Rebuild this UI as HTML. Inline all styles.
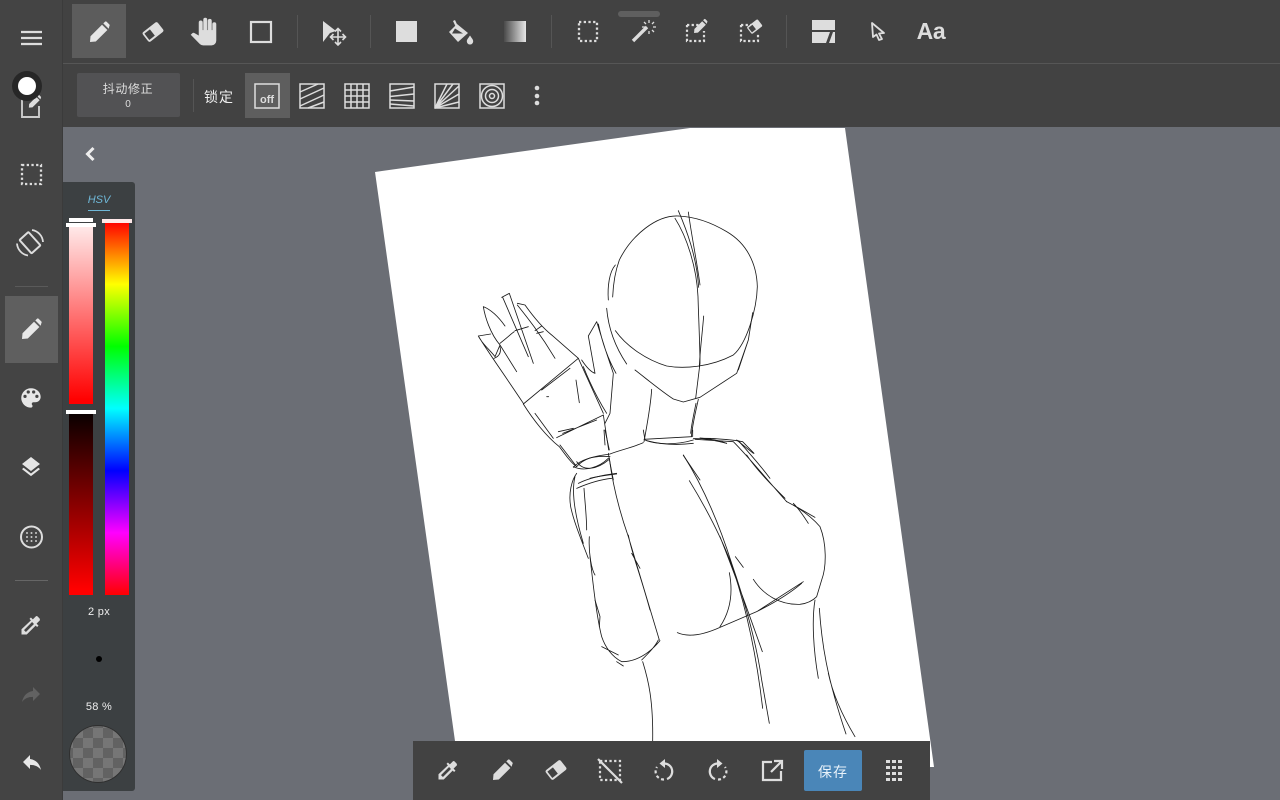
<!DOCTYPE html>
<html><head><meta charset="utf-8">
<style>
html,body{margin:0;padding:0;width:1280px;height:800px;overflow:hidden;background:#6b6e75}
body{position:relative;font-family:"Liberation Sans","WenQuanYi Zen Hei","Noto Sans CJK SC",sans-serif;color:#eee}
.a{position:absolute}
.t{position:absolute;white-space:nowrap;text-align:center;transform:translateX(-50%)}
</style></head><body>
<svg class="a" style="left:0;top:0" width="1280" height="800" viewBox="0 0 1280 800">
<defs>
<path id="pen" d="M3 22 3.500 16.200 15 4.700 20.400 10 8.800 21.500ZM16.300 3.400 18 1.700Q18.800 1 19.600 1.700L22.400 4.500Q23.100 5.300 22.400 6L21.700 8.700Z"/>
<g id="era"><g transform="rotate(-38 12 12)"><rect x="2.500" y="6" width="19" height="12" rx="2"/><rect x="4.200" y="8" width="7" height="8" fill="#424242"/></g></g>
<path id="drop" d="M20.710 5.630l-2.340-2.340a1 1 0 0 0-1.410 0l-3.120 3.120-1.930-1.910-1.410 1.410 1.420 1.420L2.500 16.250V21.500h5.250l8.920-8.920 1.420 1.420 1.410-1.410-1.920-1.920 3.120-3.120a1 1 0 0 0 .01-1.420zM6.920 19L5 17.080l8.060-8.060 1.920 1.920L6.920 19z"/>
</defs>

<!-- paper -->
<polygon points="375,172 690,128 845,128 934,767 930,767 930,741 455,741" fill="#fff"/>

<!-- sketch: upper -->
<g transform="translate(470 200) scale(.33333)" fill="none" stroke="#1a1a1a" stroke-width="2.500" stroke-linecap="round" stroke-linejoin="round">
<path d="M625 48C560 45 485 105 448 180 428 235 428 300 428 290"/>
<path d="M436 195C418 215 412 260 415 300M410 325C415 385 435 440 470 492"/>
<path d="M436 392C470 440 530 480 590 498 640 507 720 502 790 465 830 430 860 330 862 260 860 190 830 130 770 95 720 65 670 50 625 48"/>
<path d="M625 32C650 90 680 170 686 262M655 36C665 110 680 180 690 255M615 55C650 110 680 200 684 290 686 360 690 440 690 490L677 595"/>
<path d="M701 348C697 400 690 450 688 500"/>
<path d="M495 510C540 545 580 578 610 597L640 606 690 592 800 520 835 420 848 338M805 510C815 480 825 450 835 420"/>
<path d="M545 568C542 620 530 680 522 725M685 598C678 630 668 670 664 710M678 610C672 640 665 670 662 700"/>
<path d="M522 718 665 710M530 722C580 735 630 735 670 730M670 716C710 712 760 718 805 722M690 714C720 716 750 722 770 730M805 722C830 750 870 795 900 835M800 722 818 725 852 760M640 766 690 840"/>
<path d="M520 728C490 742 450 750 420 762 385 768 345 770 320 800M310 800C340 815 385 805 415 775M415 760C420 790 425 815 430 840M360 835C385 828 415 825 440 822"/>
<path d="M95 292 118 280 190 490M98 292 175 470M40 320C45 350 60 400 90 435L140 515M40 320C65 330 85 350 105 378M25 408 62 402M25 408C35 430 60 450 75 470L90 435M25 408C50 450 100 520 160 610"/>
<path d="M142 310 165 315C190 350 220 385 245 405L325 475M142 315C170 350 210 400 255 475M90 430C115 410 125 400 133 395M135 392 175 380M195 392 215 378M200 400 220 395M90 440C95 460 85 470 72 475"/>
<path d="M160 612 325 475 400 640M215 570 300 505M318 540 328 608M230 590 236 590"/>
<path d="M160 612C190 660 230 710 268 740 290 770 305 790 320 800M195 640 250 715M260 713 400 645M278 700 380 660"/>
<path d="M400 645 416 750M402 690 405 735"/>
<path d="M335 480C345 495 360 515 375 520L355 408 380 365 405 445 430 520 420 640 405 670M385 372C395 420 410 470 438 520M340 500C360 550 385 600 410 640"/>
</g>
<!-- sketch: lower -->
<g transform="translate(560 430) scale(.33333)" fill="none" stroke="#1a1a1a" stroke-width="2.500" stroke-linecap="round" stroke-linejoin="round">
<path d="M40 112C60 90 100 75 150 80M50 95C70 125 110 120 148 88M55 160C85 145 130 135 170 130M50 175C85 160 125 148 155 145"/>
<path d="M50 130C35 150 25 190 32 230 40 270 60 320 85 385M45 140C35 180 40 240 70 340M72 175C75 220 80 260 80 300M88 320C85 370 95 420 105 435"/>
<path d="M90 380C100 470 110 560 125 620 135 650 155 680 185 695 220 695 260 680 300 632M125 650 175 675M170 695 190 708M245 690C270 665 285 650 295 630"/>
<path d="M105 510 120 560 118 590"/>
<path d="M148 85C155 140 170 220 205 320 230 400 270 540 298 630M205 315C215 370 240 430 270 540M215 370 240 415"/>
<path d="M248 695C265 750 280 810 278 935"/>
<path d="M370 75C430 170 480 290 515 400 550 500 590 640 605 750L628 880M388 152C430 220 490 330 520 420 560 540 590 680 608 835M480 320C520 420 570 560 607 665"/>
<path d="M526 380 550 412"/>
<path d="M508 428C520 490 510 545 480 590M352 608C390 625 440 610 480 592L590 545 730 455M590 545C640 520 690 490 725 460M580 448C610 495 660 525 720 523 745 520 760 510 770 500L785 450C800 410 800 340 780 290 750 255 710 230 680 215"/>
<path d="M405 28 520 35C570 85 630 160 680 215M420 25C450 28 480 35 500 40M530 30 580 70M560 75C590 120 640 170 675 205M700 220C720 240 735 265 745 280M700 225 765 262"/>
<path d="M255 30C290 45 350 45 400 30M255 30 250 0M398 20V0M135 0 148 60M0 45 50 110M-5 5 40 -5"/>
<path d="M765 510C755 570 760 660 775 745M778 535C785 640 800 740 858 912M805 730C820 800 855 870 885 920"/>
</g>
</svg>

<!-- toolbars -->
<div class="a" style="left:0;top:0;width:1280px;height:63px;background:#424242"></div>
<div class="a" style="left:63px;top:63px;width:1217px;height:1px;background:#565656"></div>
<div class="a" style="left:0;top:64px;width:1280px;height:63px;background:#424242"></div>
<div class="a" style="left:0;top:0;width:62px;height:800px;background:#444"></div>
<div class="a" style="left:62px;top:0;width:1px;height:800px;background:#3b3b3b"></div>
<div class="a" style="left:72px;top:4px;width:54px;height:54px;background:#5c5c5c"></div>
<div class="a" style="left:618px;top:11px;width:42px;height:6px;border-radius:3px;background:#5f5f5f"></div>
<div class="a" style="left:77px;top:73px;width:103px;height:44px;background:#525254;border-radius:2px"></div>
<div class="a" style="left:245px;top:73px;width:45px;height:45px;background:#5e5e5e"></div>
<div class="a" style="left:5px;top:296px;width:53px;height:67px;background:#5f5f5f"></div>
<!-- bottom bar -->
<div class="a" style="left:413px;top:741px;width:517px;height:59px;background:#424242"></div>
<div class="a" style="left:804px;top:750px;width:58px;height:41px;background:#4a86b8;border-radius:2px"></div>

<!-- colour panel -->
<div class="a" style="left:63px;top:182px;width:72px;height:609px;background:#3c4042;border-radius:0 3px 3px 0"></div>
<div class="a" style="left:69px;top:226px;width:24px;height:178px;background:linear-gradient(#ffeaea,#ff0000 98%)"></div>
<div class="a" style="left:69px;top:414px;width:24px;height:181px;background:linear-gradient(#0a0000,#ff0000 97%)"></div>
<div class="a" style="left:105px;top:222px;width:24px;height:373px;background:linear-gradient(#f00,#ff0 16.67%,#0f0 33.33%,#0ff 50%,#00f 66.67%,#f0f 83.33%,#f00)"></div>
<div class="a" style="left:69px;top:218px;width:24px;height:4px;background:#fff"></div>
<div class="a" style="left:66px;top:223px;width:30px;height:4px;background:#fff"></div>
<div class="a" style="left:66px;top:410px;width:30px;height:4px;background:#fff"></div>
<div class="a" style="left:102px;top:219px;width:30px;height:4px;background:#ffe9e9"></div>
<div class="a" style="left:88px;top:210px;width:22px;height:1px;background:#6fb8d8"></div>
<div class="a" style="left:96px;top:656px;width:6px;height:6px;border-radius:50%;background:#000"></div>
<div class="a" style="left:70px;top:726px;width:56px;height:56px;border-radius:50%;box-shadow:0 0 0 1px #2f2f2f;background:repeating-conic-gradient(#626262 0 25%,#767676 0 50%) 3px 2px/20px 20px"></div>

<!-- text -->
<div class="t" style="left:128px;top:80px;font-size:12px;letter-spacing:.6px;color:#ddd">抖动修正</div>
<div class="t" style="left:128px;top:99px;font-size:10px;color:#ddd">0</div>
<div class="t" style="left:219px;top:87px;font-size:14px;color:#eee;letter-spacing:1px">锁定</div>
<div class="t" style="left:99px;top:194px;font-size:11px;font-style:italic;color:#6fb8d8">HSV</div>
<div class="t" style="left:99px;top:606px;font-size:11px;letter-spacing:.3px;color:#eee">2 px</div>
<div class="t" style="left:99px;top:701px;font-size:11px;letter-spacing:.3px;color:#eee">58 %</div>
<div class="t" style="left:833px;top:762px;font-size:14px;letter-spacing:1px;color:#e8f2fa">保存</div>
<div class="t" style="left:931px;top:18px;font-size:23px;font-weight:bold;color:#ddd;letter-spacing:-.3px">Aa</div>
<div class="t" style="left:267px;top:94px;font-size:11px;font-weight:bold;color:#ddd">off</div>

<!-- icons -->
<svg class="a" style="left:0;top:0" width="1280" height="800" viewBox="0 0 1280 800" fill="#ddd">
<!-- top row -->
<use href="#pen" transform="translate(87 20)" fill="#e6e6e6"/>
<use href="#era" transform="translate(141 20)"/>
<path transform="translate(190 18) scale(1.13)" stroke="#ddd" stroke-width=".5" d="M23 5.500V20c0 2.200-1.800 4-4 4h-7.300c-1.080 0-2.100-.43-2.850-1.190L1 14.830s1.260-1.230 1.300-1.250c.22-.19.49-.29.79-.29.22 0 .42.06.6.16.04.01 4.310 2.460 4.310 2.460V4c0-.83.67-1.500 1.500-1.500S11 3.170 11 4v7h1V1.500c0-.83.67-1.500 1.500-1.500S15 .67 15 1.500V11h1V2.500c0-.83.67-1.500 1.500-1.500s1.500.67 1.500 1.500V11h1V5.500c0-.83.67-1.500 1.500-1.500s1.500.67 1.500 1.500z"/>
<rect x="251" y="22" width="20" height="20" fill="none" stroke="#ddd" stroke-width="2.200"/>
<g fill="#555"><rect x="297" y="15" width="1" height="33"/><rect x="370" y="15" width="1" height="33"/><rect x="551" y="15" width="1" height="33"/><rect x="786" y="15" width="1" height="33"/><rect x="193" y="79" width="1" height="33"/></g>
<!-- move -->
<path d="M323 21 336 31 330 33 323 42z"/>
<path d="M338 29V44M331 37H346M335 31.500 338 28.500 341 31.500M335 42 338 45 341 42M333.500 34 330.500 37 333.500 40M342.500 34 345.500 37 342.500 40" fill="none" stroke="#ddd" stroke-width="1.600"/>
<rect x="396" y="21" width="21" height="21"/>
<!-- bucket -->
<path d="M449 32 457 24 468 33 458 42Z"/>
<path d="M454 20.500 458 29" stroke="#ddd" stroke-width="2.200" fill="none"/>
<path d="M455 28.500 463 33.500H452z" fill="#424242"/>
<path d="M470 35.500c2 3 3.200 4.200 3.200 5.800a3.200 3.200 0 0 1-6.400 0c0-1.600 1.200-2.800 3.200-5.800z"/>
<defs><linearGradient id="g1"><stop offset="0" stop-color="#4a4a4a"/><stop offset="1" stop-color="#e6e6e6"/></linearGradient></defs>
<rect x="504" y="21" width="22" height="21" fill="url(#g1)"/>
<rect x="579" y="22" width="18" height="19" fill="none" stroke="#ddd" stroke-width="2.300" stroke-dasharray="2.300 2.400"/>
<!-- wand -->
<path d="M633 41 647 27" stroke="#ddd" stroke-width="3.400"/>
<path d="M649 20V23M649 31V34M642 27H645M653 27H656M644 22 646 24M652 30 654 32M654 22 652 24" stroke="#ddd" stroke-width="1.300"/>
<!-- sel pen -->
<path d="M687 25H703M687 25V41H704V31" fill="none" stroke="#ddd" stroke-width="2.200" stroke-dasharray="2.300 2.300"/>
<use href="#pen" transform="translate(692 18) scale(.68)"/>
<!-- sel eraser -->
<path d="M741 25H755M741 25V41H758V33" fill="none" stroke="#ddd" stroke-width="2.200" stroke-dasharray="2.300 2.300"/>
<use href="#era" transform="translate(746 18) scale(.72)"/>
<!-- panels -->
<path d="M812 20H835V30H812ZM812 32H830L826 43H812ZM833 32H835V43H829Z"/>
<!-- cursor -->
<path d="M872 23 884 33 879 33.500 882 39 879 40 876.500 34.500 873 37z" fill="none" stroke="#ddd" stroke-width="1.800" stroke-linejoin="round"/>

<!-- lock row -->
<rect x="255" y="84" width="24" height="24" fill="none" stroke="#ddd" stroke-width="1.500"/>
<g fill="none" stroke="#ddd" stroke-width="1.500">
<rect x="300" y="84" width="24" height="24"/>
<path d="M300 92 318 84M300 99 324 88M300 106 324 95M308 108 324 102"/>
<rect x="345" y="84" width="24" height="24"/>
<path d="M351 84V108M357 84V108M363 84V108M345 90H369M345 96H369M345 102H369"/>
<rect x="390" y="84" width="24" height="24"/>
<path d="M390 91 414 87M390 96.500 414 94M390 100 414 101M390 104 414 106"/>
<rect x="435" y="84" width="24" height="24"/>
<path d="M435 108 447 84M435 108 453 84M435 108 459 86M435 108 459 94M435 108 459 102"/>
<rect x="480" y="84" width="24" height="24"/>
<circle cx="492" cy="96" r="10.500"/><circle cx="492" cy="96" r="6.500"/><circle cx="492" cy="96" r="2.500"/>
</g>
<circle cx="537" cy="88" r="2.300"/><circle cx="537" cy="96" r="2.300"/><circle cx="537" cy="103" r="2.300"/>

<!-- sidebar -->
<path d="M21 32H42M21 38H42M21 44H42" stroke="#ddd" stroke-width="2.200"/>
<path d="M22 99H33M22 99V117H39V106" fill="none" stroke="#ccc" stroke-width="1.900"/>
<use href="#pen" transform="translate(27 94) scale(.62)"/>
<circle cx="27" cy="86" r="15" fill="#272727"/><circle cx="27" cy="86" r="9" fill="#fff"/>
<rect x="22" y="165" width="19" height="19" fill="none" stroke="#ddd" stroke-width="2.300" stroke-dasharray="2.300 2.400"/>
<!-- rotate -->
<g fill="none" stroke="#ddd" stroke-width="1.800">
<rect x="21" y="236.700" width="18" height="12" rx="1" transform="rotate(48 30 242.700)" stroke-width="2"/>
<path d="M32 230A13 13 0 0 1 43 242M28 255.500A13 13 0 0 1 17 243.500"/>
</g>
<rect x="15" y="286" width="33" height="1" fill="#5a5a5a"/>
<use href="#pen" transform="translate(19 317)" fill="#e8e8e8"/>
<path transform="translate(18 385) scale(1.08)" d="M12 3a9 9 0 0 0 0 18c.83 0 1.500-.67 1.500-1.500 0-.39-.15-.74-.39-1.010-.23-.26-.38-.61-.38-.99 0-.83.67-1.500 1.500-1.500H16c2.760 0 5-2.240 5-5 0-4.420-4.030-8-9-8zm-5.500 9a1.500 1.500 0 1 1 0-3 1.500 1.500 0 0 1 0 3zm3-4a1.500 1.500 0 1 1 0-3 1.500 1.500 0 0 1 0 3zm5 0a1.500 1.500 0 1 1 0-3 1.500 1.500 0 0 1 0 3zm3 4a1.500 1.500 0 1 1 0-3 1.500 1.500 0 0 1 0 3z" fill="#e6e6e6"/>
<path transform="translate(19 455)" d="M11.990 18.540l-7.370-5.730L3 14.070l9 7 9-7-1.630-1.270-7.380 5.740zM12 16l7.360-5.730L21 9l-9-7-9 7 1.630 1.270L12 16z" fill="#e6e6e6"/>
<circle cx="31.500" cy="537" r="10.500" fill="none" stroke="#ddd" stroke-width="2"/>
<g fill="#ccc"><circle cx="27" cy="533" r="1"/><circle cx="31.500" cy="533" r="1"/><circle cx="36" cy="533" r="1"/><circle cx="27" cy="537" r="1"/><circle cx="31.500" cy="537" r="1"/><circle cx="36" cy="537" r="1"/><circle cx="27" cy="541" r="1"/><circle cx="31.500" cy="541" r="1"/><circle cx="36" cy="541" r="1"/></g>
<rect x="15" y="580" width="33" height="1" fill="#666"/>
<use href="#drop" transform="translate(19 613)"/>
<path transform="translate(43 682) scale(-1 1)" d="M10 9V5l-7 7 7 7v-4.100c5 0 8.500 1.600 11 5.100-1-5-4-10-11-11z" fill="#626262"/>
<path transform="translate(20 750)" d="M10 9V5l-7 7 7 7v-4.100c5 0 8.500 1.600 11 5.100-1-5-4-10-11-11z" fill="#e8e8e8"/>

<!-- back -->
<path d="M93.500 148 87.500 154 93.500 160" fill="none" stroke="#eee" stroke-width="3"/>

<!-- bottom -->
<use href="#drop" transform="translate(436 758)"/>
<use href="#pen" transform="translate(490 758)"/>
<use href="#era" transform="translate(544 758)"/>
<rect x="600" y="761" width="20" height="19" fill="none" stroke="#ddd" stroke-width="2.200" stroke-dasharray="2.300 2.400"/>
<path d="M598 759 622 783" stroke="#ddd" stroke-width="2.200"/>
<g fill="none" stroke="#ddd" stroke-width="2.200">
<path d="M664 763.500A8 8 0 0 1 667 779"/>
<path d="M664 779.500A8 8 0 0 1 657 767" stroke-dasharray="3 2.500"/>
<path d="M718 763.500A8 8 0 0 0 715 779"/>
<path d="M718 779.500A8 8 0 0 0 725 767" stroke-dasharray="3 2.500"/>
<path d="M772 762H763V780H781V771M771 772 781 762M774 761H782V769" stroke-width="2.200"/>
</g>
<path d="M665 759 659.500 763.500 665 768zM717 759 722.500 763.500 717 768z"/>
<g fill="#ddd">
<rect x="886" y="760" width="4" height="3"/><rect x="892" y="760" width="4" height="3"/><rect x="898" y="760" width="4" height="3"/>
<rect x="886" y="766" width="4" height="3"/><rect x="892" y="766" width="4" height="3"/><rect x="898" y="766" width="4" height="3"/>
<rect x="886" y="772" width="4" height="3"/><rect x="892" y="772" width="4" height="3"/><rect x="898" y="772" width="4" height="3"/>
<rect x="886" y="778" width="4" height="3"/><rect x="892" y="778" width="4" height="3"/><rect x="898" y="778" width="4" height="3"/>
</g>
</svg>
</body></html>
